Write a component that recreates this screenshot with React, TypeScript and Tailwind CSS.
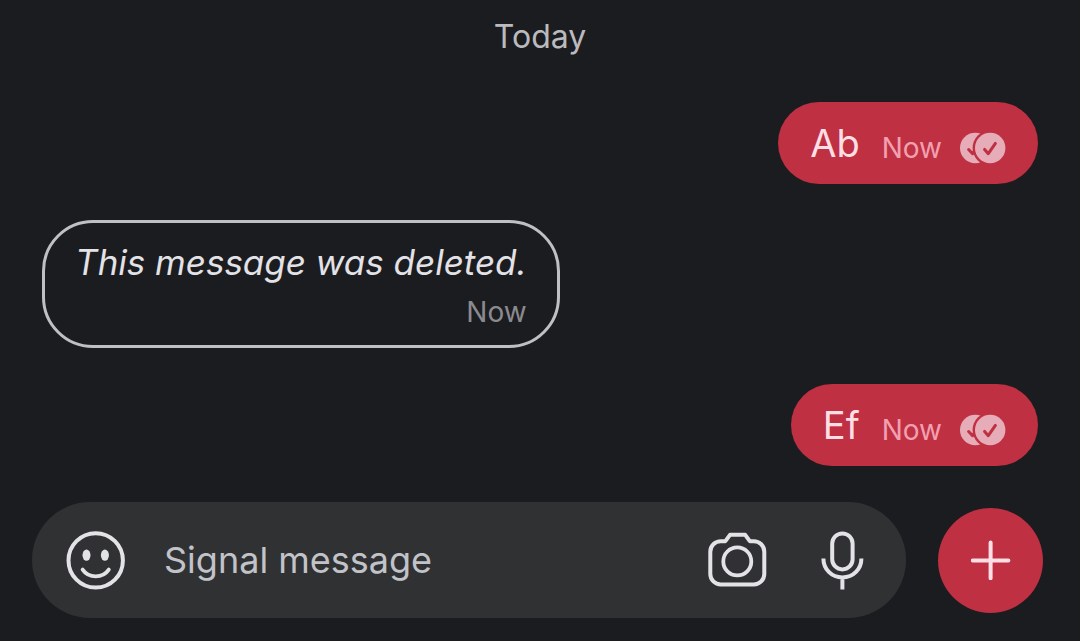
import type { ReactNode } from "react";

const ReadReceipt = () => (
  <svg
    viewBox="0 0 46 32"
    className="h-8 w-[46px] shrink-0"
    fill="none"
    role="img"
    aria-label="Read"
  >
    <circle cx="15.2" cy="16" r="15.2" fill="#e6acb7" />
    <path
      d="M8.6 17.5l4 4.2 7-10.2"
      stroke="#be3042"
      strokeWidth="3"
      strokeLinecap="round"
      strokeLinejoin="round"
    />
    <circle cx="30.2" cy="16" r="17.6" fill="#be3042" />
    <circle cx="30.2" cy="16" r="15.2" fill="#e6acb7" />
    <path
      d="M24.6 17.4l3.7 4.3 7.1-10.3"
      stroke="#be3042"
      strokeWidth="3"
      strokeLinecap="round"
      strokeLinejoin="round"
    />
  </svg>
);

const EmojiIcon = () => (
  <svg viewBox="0 0 60 60" className="size-[60px]" fill="none" aria-hidden="true">
    <circle cx="29.7" cy="30.4" r="27.2" stroke="#e3e2e6" strokeWidth="4" />
    <ellipse cx="20.5" cy="25.2" rx="4" ry="5.6" fill="#e3e2e6" />
    <ellipse cx="38.9" cy="25.2" rx="4" ry="5.6" fill="#e3e2e6" />
    <path
      d="M16.6 39.6C22.8 48.6 36.6 48.6 42.8 39.6"
      stroke="#e3e2e6"
      strokeWidth="3.8"
      strokeLinecap="round"
    />
  </svg>
);

const CameraIcon = () => (
  <svg viewBox="0 0 60 60" className="size-[60px]" fill="none" aria-hidden="true">
    <path
      d="M18.4 11.2L23 4.8H38.2L42.8 11.2H46.8A10.5 10.5 0 0 1 57.3 21.7V44A10.5 10.5 0 0 1 46.8 54.5H13.8A10.5 10.5 0 0 1 3.3 44V21.7A10.5 10.5 0 0 1 13.8 11.2Z"
      stroke="#e3e2e6"
      strokeWidth="4"
      strokeLinejoin="round"
    />
    <circle cx="30.3" cy="31.4" r="14" stroke="#e3e2e6" strokeWidth="3.8" />
  </svg>
);

const MicIcon = () => (
  <svg viewBox="0 0 60 60" className="size-[60px]" fill="none" aria-hidden="true">
    <rect x="20.2" y="3.4" width="20.4" height="36" rx="10.2" stroke="#e3e2e6" strokeWidth="4" />
    <path
      d="M11.4 28.5C11.4 39 19.4 47.4 30.4 47.4S49.4 39 49.4 28.5M30.4 47.4V59.5"
      stroke="#e3e2e6"
      strokeWidth="4"
    />
  </svg>
);

const PlusIcon = () => (
  <svg viewBox="0 0 40 40" className="size-10" fill="none" aria-hidden="true">
    <path d="M19.6 2.6V38.2M1.8 20.4H37.4" stroke="#ffdfe5" strokeWidth="4" strokeLinecap="round" />
  </svg>
);

const SentMessage = ({ children }: { children: ReactNode }) => (
  <li className="flex h-[82px] items-center self-end rounded-full bg-[#be3042] px-8">
    <p className="text-[38px] leading-[48px] text-[#ffdfe5]">{children}</p>
    <div className="mt-[10px] ml-[22px] flex items-center gap-[18px]">
      <time className="text-[28px] leading-9 text-[#f2a0b0]">Now</time>
      <ReadReceipt />
    </div>
  </li>
);

export default function App() {
  return (
    <main className="flex min-h-screen flex-col bg-[#1b1c20] font-['Inter','Open_Sans',sans-serif]">
      <h2 className="pt-[17px] text-center text-[32px] leading-10 text-[#bbbbbe]">Today</h2>

      <ol className="mt-[45px] flex flex-col gap-9 px-[42px]">
        <SentMessage>Ab</SentMessage>
        <li className="flex flex-col self-start rounded-[51px] border-3 border-[#bfc0c3] px-[30px] pt-[15px] pb-[15px]">
          <p className="text-[35px] leading-[48px] text-[#e3e2e6] italic">
            This message was deleted.
          </p>
          <time className="mt-2 self-end text-[28px] leading-9 text-[#8b8b8f]">Now</time>
        </li>
        <SentMessage>Ef</SentMessage>
      </ol>

      <form className="mt-9 flex items-center gap-8 pr-[37px] pb-[23px] pl-8">
        <div className="flex h-[116px] min-w-0 flex-1 items-center rounded-full bg-[#303133] px-[34px]">
          <button type="button" aria-label="Emoji">
            <EmojiIcon />
          </button>
          <input
            type="text"
            aria-label="Signal message"
            placeholder="Signal message"
            className="ml-[38px] min-w-0 flex-1 bg-transparent text-[36px] leading-[48px] text-[#e3e2e6] outline-none placeholder:text-[#c2c3c9]"
          />
          <button type="button" aria-label="Camera">
            <CameraIcon />
          </button>
          <button type="button" aria-label="Voice message" className="ml-[45px]">
            <MicIcon />
          </button>
        </div>
        <button
          type="button"
          aria-label="Add attachment"
          className="flex size-[105px] shrink-0 items-center justify-center rounded-full bg-[#be3042]"
        >
          <PlusIcon />
        </button>
      </form>
    </main>
  );
}
